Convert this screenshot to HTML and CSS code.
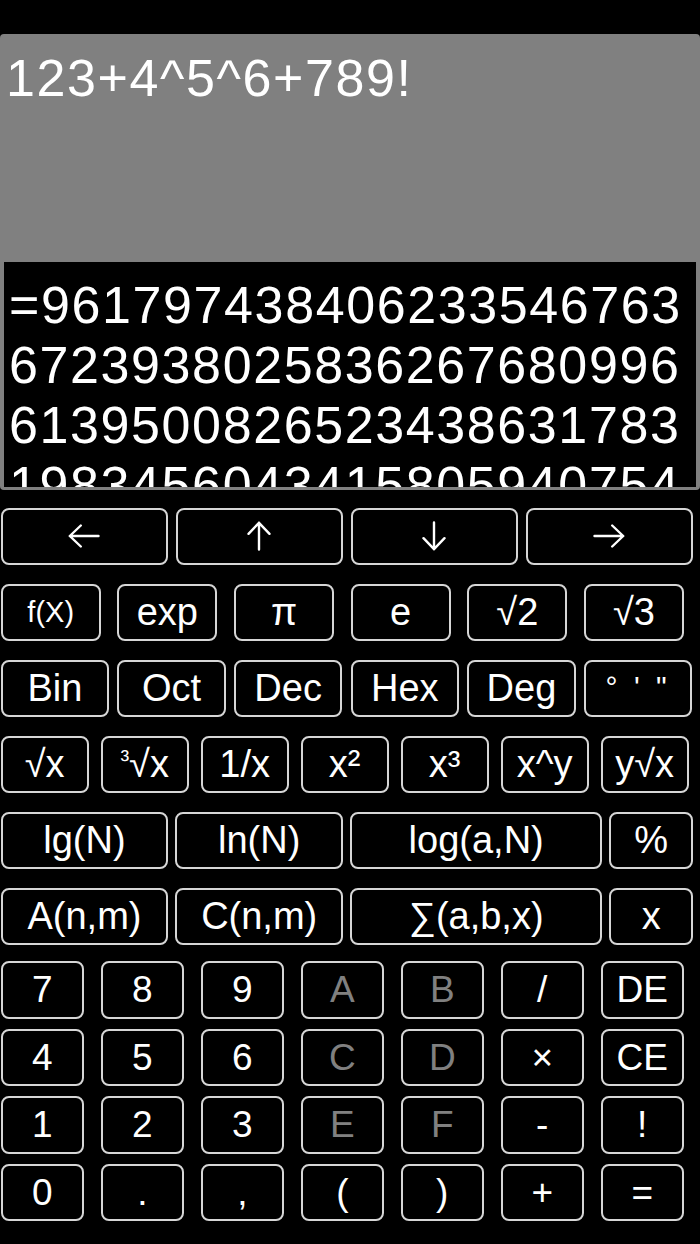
FILE: index.html
```html
<!DOCTYPE html>
<html lang="en">
<head>
<meta charset="utf-8">
<title>Calculator</title>
<link rel="stylesheet" href="styles.css">
</head>
<body>
<div class="app">
  <div class="display">
    <div class="input">123+4^5^6+789!</div>
    <div class="result">
      <div class="line">=961797438406233546763</div>
      <div class="line">6723938025836267680996</div>
      <div class="line">6139500826523438631783</div>
      <div class="line">1983456043415805940754</div>
    </div>
  </div>

  <div class="keys keys-upper">
    <div class="row row-arrows">
      <button class="key" aria-label="left"><svg class="arrow-h" viewBox="0 0 32 24"><path d="M30.5 12H1.8M12.8 1.5L1.8 12L12.8 22.5"/></svg></button>
      <button class="key" aria-label="up"><svg class="arrow-v" viewBox="0 0 24 30"><path d="M12 28.5V1.8M1.5 12.8L12 1.8L22.5 12.8"/></svg></button>
      <button class="key" aria-label="down"><svg class="arrow-v" viewBox="0 0 24 30"><path d="M12 1.5V28.2M1.5 17.2L12 28.2L22.5 17.2"/></svg></button>
      <button class="key" aria-label="right"><svg class="arrow-h" viewBox="0 0 32 24"><path d="M1.5 12H30.2M19.2 1.5L30.2 12L19.2 22.5"/></svg></button>
    </div>
    <div class="row row-six-narrow">
      <button class="key small">f(X)</button>
      <button class="key">exp</button>
      <button class="key">π</button>
      <button class="key">e</button>
      <button class="key">√2</button>
      <button class="key">√3</button>
    </div>
    <div class="row row-six-wide">
      <button class="key">Bin</button>
      <button class="key">Oct</button>
      <button class="key">Dec</button>
      <button class="key">Hex</button>
      <button class="key">Deg</button>
      <button class="key tiny"><span class="marks">°&nbsp;'&nbsp;"</span></button>
    </div>
    <div class="row row-seven-mid">
      <button class="key">√x</button>
      <button class="key"><span class="lbl"><span class="idx">³</span>√x</span></button>
      <button class="key">1/x</button>
      <button class="key">x²</button>
      <button class="key">x³</button>
      <button class="key">x^y</button>
      <button class="key">y√x</button>
    </div>
    <div class="row row-four">
      <button class="key">lg(N)</button>
      <button class="key">ln(N)</button>
      <button class="key">log(a,N)</button>
      <button class="key">%</button>
    </div>
    <div class="row row-four">
      <button class="key">A(n,m)</button>
      <button class="key">C(n,m)</button>
      <button class="key">∑(a,b,x)</button>
      <button class="key">x</button>
    </div>
  </div>

  <div class="keys keys-lower">
    <div class="row row-digits">
      <button class="key num">7</button>
      <button class="key num">8</button>
      <button class="key num">9</button>
      <button class="key num hex">A</button>
      <button class="key num hex">B</button>
      <button class="key num">/</button>
      <button class="key num">DE</button>
    </div>
    <div class="row row-digits">
      <button class="key num">4</button>
      <button class="key num">5</button>
      <button class="key num">6</button>
      <button class="key num hex">C</button>
      <button class="key num hex">D</button>
      <button class="key num">×</button>
      <button class="key num">CE</button>
    </div>
    <div class="row row-digits">
      <button class="key num">1</button>
      <button class="key num">2</button>
      <button class="key num">3</button>
      <button class="key num hex">E</button>
      <button class="key num hex">F</button>
      <button class="key num">-</button>
      <button class="key num">!</button>
    </div>
    <div class="row row-digits">
      <button class="key num">0</button>
      <button class="key num">.</button>
      <button class="key num">,</button>
      <button class="key num">(</button>
      <button class="key num">)</button>
      <button class="key num">+</button>
      <button class="key num">=</button>
    </div>
  </div>
</div>
</body>
</html>
```
FILE: styles.css
```css
html, body {
  margin: 0;
  padding: 0;
  background: #000;
}

body {
  width: 700px;
  height: 1244px;
  overflow: hidden;
  font-family: "Liberation Sans", "DejaVu Sans", sans-serif;
  color: #fff;
}

.app {
  padding-top: 34px;
}

.display {
  background: #808080;
  border-radius: 4px;
  padding: 0 4px 3px 4px;
}

.input {
  box-sizing: border-box;
  height: 228px;
  padding: 15px 0 0 2px;
  font-size: 52px;
  line-height: 58px;
  letter-spacing: 1.6px;
  color: #fff;
  white-space: nowrap;
}

.result {
  box-sizing: border-box;
  height: 225px;
  background: #000;
  overflow: hidden;
  padding: 13.3px 0 0 5px;
  font-size: 52px;
  line-height: 60px;
  letter-spacing: 1.6px;
  white-space: nowrap;
}

.keys {
  display: flex;
  flex-direction: column;
}

.keys-upper {
  margin-top: 17.5px;
  gap: 18.5px;
}

.keys-lower {
  margin-top: 16px;
  gap: 10px;
}

.row {
  display: grid;
  padding-left: 0.7px;
}

.row-arrows {
  grid-template-columns: repeat(4, 167.5px);
  column-gap: 7.5px;
}

.row-six-narrow {
  grid-template-columns: repeat(6, 100px);
  column-gap: 16.67px;
}

.row-six-wide {
  grid-template-columns: repeat(6, 108.3px);
  column-gap: 8.37px;
}

.row-seven-mid {
  grid-template-columns: repeat(7, 88px);
  column-gap: 12px;
}

.row-four {
  grid-template-columns: 167.5px 168px 252px 84px;
  column-gap: 7px;
}

.row-digits {
  grid-template-columns: repeat(7, 83.3px);
  column-gap: 16.7px;
}

.key {
  box-sizing: border-box;
  height: 57.5px;
  margin: 0;
  padding: 0;
  border: 2px solid #d6d6d6;
  border-radius: 8px;
  background: #000;
  color: #fff;
  display: flex;
  align-items: center;
  justify-content: center;
  font-family: "Liberation Sans", "DejaVu Sans", sans-serif;
  font-size: 38px;
  line-height: 1;
  white-space: nowrap;
}

.key.small {
  font-size: 29px;
}

.key.num {
  font-size: 37px;
}

.key.hex {
  color: #808080;
}

.marks {
  display: inline-block;
  font-size: 30px;
  letter-spacing: 4px;
  transform: translateY(-1px);
}

.idx {
  font-size: 26px;
  vertical-align: 9px;
  margin-right: 0;
}

.arrow-h {
  width: 32px;
  height: 24px;
  fill: none;
  stroke: #fff;
  stroke-width: 2.4;
  stroke-linecap: round;
  stroke-linejoin: round;
}

.arrow-v {
  width: 24px;
  height: 30px;
  fill: none;
  stroke: #fff;
  stroke-width: 2.4;
  stroke-linecap: round;
  stroke-linejoin: round;
}
```
